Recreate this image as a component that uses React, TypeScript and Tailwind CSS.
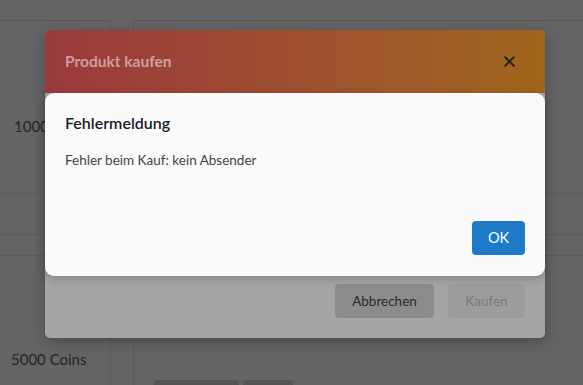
import { X } from "lucide-react";

const font = { fontFamily: "Lato, 'Noto Sans', sans-serif" };

const Background = () => {
  return (
    <div className="flex h-full flex-col pt-[20px] text-[15px] text-[#262626]">
      <div className="flex h-[173px]">
        <div className="w-[111px] border-t border-r border-[#595959] pt-[94px] pl-[14px] whitespace-nowrap">
          1000 Coins
        </div>
        <div className="w-[22px]" />
        <div className="flex-1 border-t border-l border-[#595959]" />
      </div>

      <div className="flex h-[41px] border-t border-[#5b5b5b]">
        <div className="w-[111px] border-r border-[#5b5b5b]" />
        <div className="w-[22px]" />
        <div className="flex-1 border-l border-[#5b5b5b]" />
      </div>

      <div className="flex h-[21px] border-t border-[#5b5b5b]">
        <div className="w-[111px] border-r border-[#5b5b5b]" />
        <div className="w-[22px]" />
        <div className="flex-1 border-l border-[#5b5b5b]" />
      </div>

      <div className="flex flex-1 border-t border-[#5b5b5b]">
        <div className="w-[111px] border-r border-[#5b5b5b] pt-[92px] pl-[11px] whitespace-nowrap">
          5000 Coins
        </div>
        <div className="w-[22px]" />
        <div className="flex flex-1 items-end gap-[4px] border-l border-[#5b5b5b] pl-[20px]">
          <div className="h-[5px] w-[85px] rounded-t-[4px] bg-[#545454]" />
          <div className="h-[5px] w-[50px] rounded-t-[4px] bg-[#545454]" />
        </div>
      </div>
    </div>
  );
};

export default function App() {
  return (
    <div
      className="relative h-[385px] w-[583px] overflow-hidden bg-[#646464]"
      style={font}
    >
      <Background />

      {/* Produkt kaufen dialog, dimmed */}
      <div className="absolute top-[30px] left-[45px] flex h-[308px] w-[500px] flex-col overflow-hidden rounded-[5px] bg-[#a5a5a5] shadow-[0_4px_14px_rgba(0,0,0,0.25)]">
        <div className="flex h-[63px] items-center justify-between bg-gradient-to-r from-[#9a383c] to-[#a0651a] pr-[27px] pl-[20px]">
          <span className="text-[15.5px] font-bold text-white/50">
            Produkt kaufen
          </span>
          <X size={17} strokeWidth={2.6} className="text-[#1f1f1f]" />
        </div>

        <div className="flex flex-1 items-end justify-end gap-[14px] pr-[20px] pb-[20px]">
          <button
            type="button"
            className="h-[34px] w-[99px] rounded-[4px] bg-[#8c8c8c] text-[13.5px] text-[#2a2a2a]"
          >
            Abbrechen
          </button>
          <button
            type="button"
            className="h-[34px] w-[77px] rounded-[4px] bg-[#9c9c9c] text-[13.5px] text-[#7a7a7a]"
          >
            Kaufen
          </button>
        </div>
      </div>

      {/* Fehlermeldung */}
      <div className="absolute top-[93px] left-[45px] flex h-[183px] w-[500px] flex-col rounded-[9px] bg-[#fafafa] px-[20px] pt-[19px] pb-[21px] shadow-[0_3px_10px_rgba(0,0,0,0.2)]">
        <h2 className="text-[16px] leading-[22px] font-semibold text-[#1c1c28]">
          Fehlermeldung
        </h2>

        <p className="mt-[17px] text-[13.5px] leading-[18px] text-[#444]">
          Fehler beim Kauf: kein Absender
        </p>

        <div className="mt-auto flex justify-end">
          <button
            type="button"
            className="h-[34px] w-[53px] rounded-[4px] bg-[#1d7ac6] text-[14.5px] text-white"
          >
            OK
          </button>
        </div>
      </div>
    </div>
  );
}
